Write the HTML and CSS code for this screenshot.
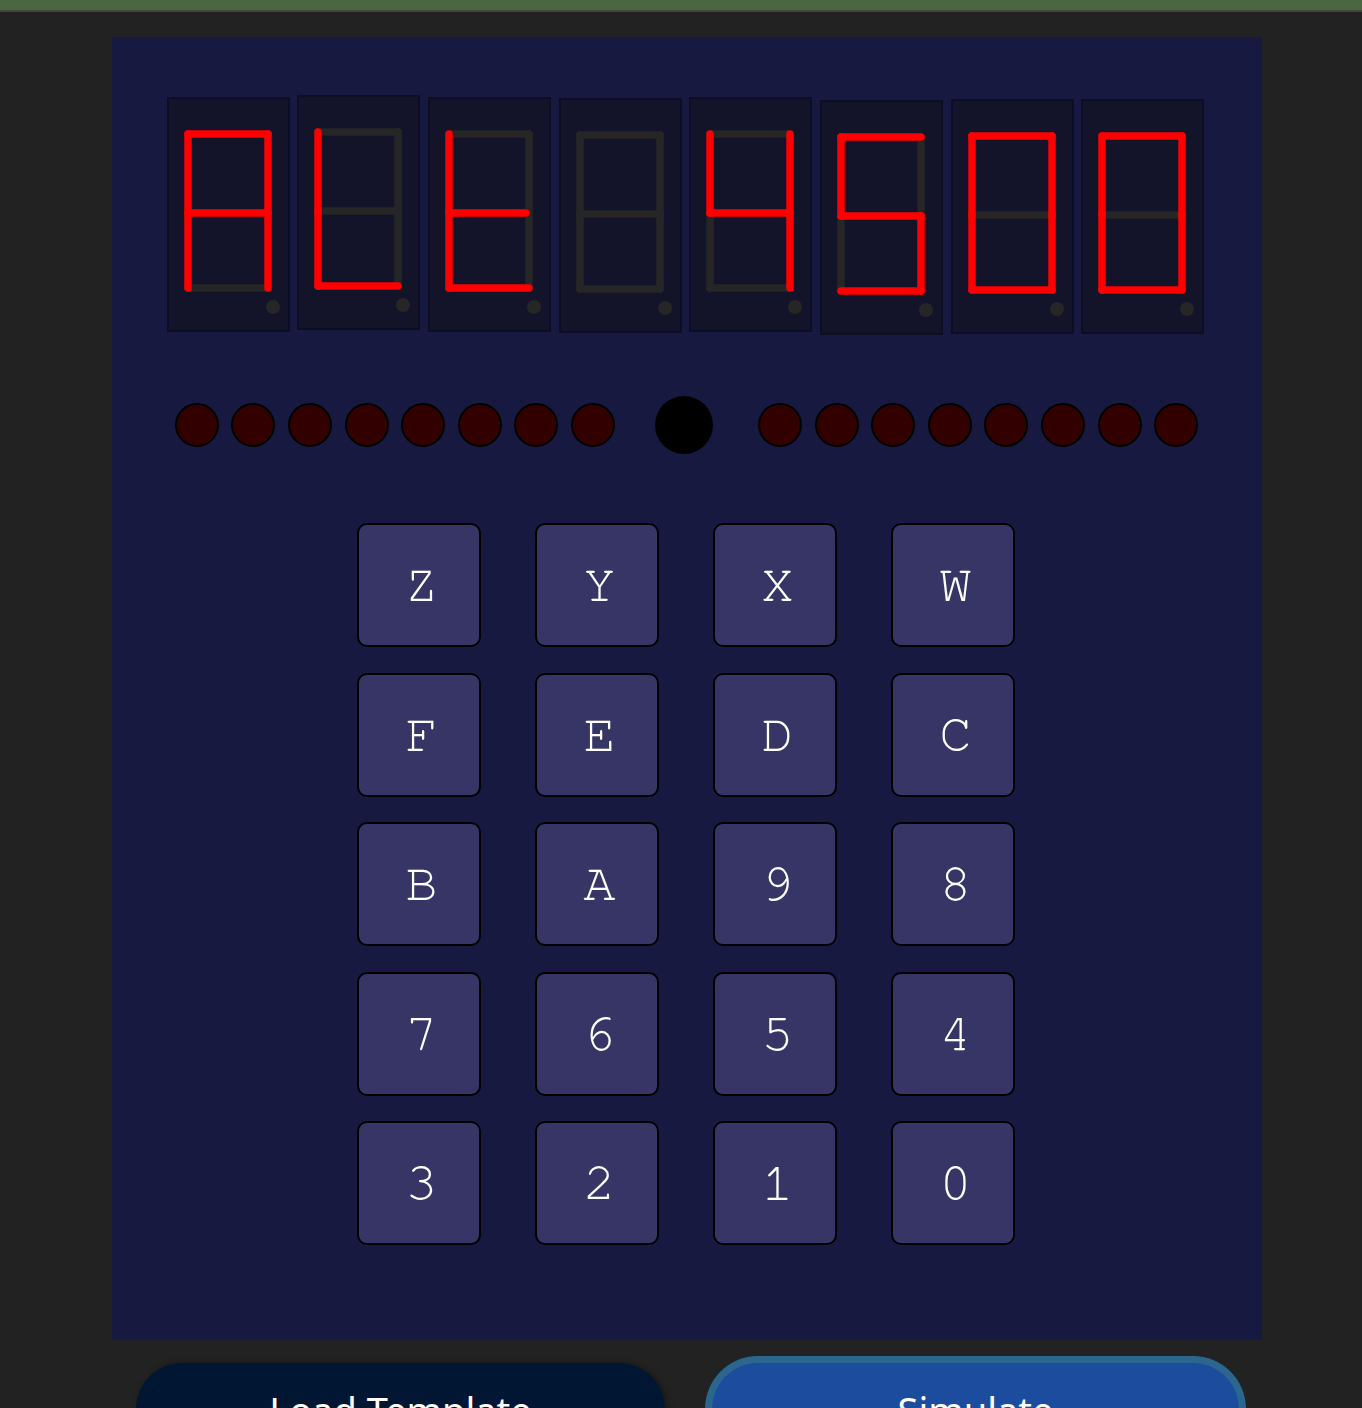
FILE: index.html
```html
<!DOCTYPE html>
<html lang="en">
<head>
<meta charset="utf-8">
<title>Hex Keypad Simulator</title>
<link rel="stylesheet" href="styles.css">
</head>
<body>
<div class="topbar"></div>
<main class="panel">
  <div class="digits">
    <div class="digit">
      <svg class="seg7" viewBox="0 0 119 231" width="119" height="231">
        <line class="seg off" x1="19" y1="189" x2="99" y2="189"/>
        <line class="seg on" x1="19" y1="35" x2="99" y2="35"/>
        <line class="seg on" x1="99" y1="35" x2="99" y2="114"/>
        <line class="seg on" x1="99" y1="114" x2="99" y2="189"/>
        <line class="seg on" x1="19" y1="114" x2="19" y2="189"/>
        <line class="seg on" x1="19" y1="35" x2="19" y2="114"/>
        <line class="seg on" x1="19" y1="114" x2="99" y2="114"/>
        <circle class="dp" cx="104" cy="208" r="7"/>
      </svg>
    </div>
    <div class="digit">
      <svg class="seg7" viewBox="0 0 119 231" width="119" height="231">
        <line class="seg off" x1="19" y1="35" x2="99" y2="35"/>
        <line class="seg off" x1="99" y1="35" x2="99" y2="114"/>
        <line class="seg off" x1="99" y1="114" x2="99" y2="189"/>
        <line class="seg off" x1="19" y1="114" x2="99" y2="114"/>
        <line class="seg on" x1="19" y1="189" x2="99" y2="189"/>
        <line class="seg on" x1="19" y1="114" x2="19" y2="189"/>
        <line class="seg on" x1="19" y1="35" x2="19" y2="114"/>
        <circle class="dp" cx="104" cy="208" r="7"/>
      </svg>
    </div>
    <div class="digit">
      <svg class="seg7" viewBox="0 0 119 231" width="119" height="231">
        <line class="seg off" x1="19" y1="35" x2="99" y2="35"/>
        <line class="seg off" x1="99" y1="35" x2="99" y2="114"/>
        <line class="seg off" x1="99" y1="114" x2="99" y2="189"/>
        <line class="seg on" x1="19" y1="189" x2="99" y2="189"/>
        <line class="seg on" x1="19" y1="114" x2="19" y2="189"/>
        <line class="seg on" x1="19" y1="35" x2="19" y2="114"/>
        <line class="seg on" x1="19" y1="114" x2="96" y2="114"/>
        <circle class="dp" cx="104" cy="208" r="7"/>
      </svg>
    </div>
    <div class="digit">
      <svg class="seg7" viewBox="0 0 119 231" width="119" height="231">
        <line class="seg off" x1="19" y1="35" x2="99" y2="35"/>
        <line class="seg off" x1="99" y1="35" x2="99" y2="114"/>
        <line class="seg off" x1="99" y1="114" x2="99" y2="189"/>
        <line class="seg off" x1="19" y1="189" x2="99" y2="189"/>
        <line class="seg off" x1="19" y1="114" x2="19" y2="189"/>
        <line class="seg off" x1="19" y1="35" x2="19" y2="114"/>
        <line class="seg off" x1="19" y1="114" x2="99" y2="114"/>
        <circle class="dp" cx="104" cy="208" r="7"/>
      </svg>
    </div>
    <div class="digit">
      <svg class="seg7" viewBox="0 0 119 231" width="119" height="231">
        <line class="seg off" x1="19" y1="35" x2="99" y2="35"/>
        <line class="seg off" x1="19" y1="189" x2="99" y2="189"/>
        <line class="seg off" x1="19" y1="114" x2="19" y2="189"/>
        <line class="seg on" x1="99" y1="35" x2="99" y2="114"/>
        <line class="seg on" x1="99" y1="114" x2="99" y2="189"/>
        <line class="seg on" x1="19" y1="35" x2="19" y2="114"/>
        <line class="seg on" x1="19" y1="114" x2="99" y2="114"/>
        <circle class="dp" cx="104" cy="208" r="7"/>
      </svg>
    </div>
    <div class="digit">
      <svg class="seg7" viewBox="0 0 119 231" width="119" height="231">
        <line class="seg off" x1="99" y1="35" x2="99" y2="114"/>
        <line class="seg off" x1="19" y1="114" x2="19" y2="189"/>
        <line class="seg on" x1="19" y1="35" x2="99" y2="35"/>
        <line class="seg on" x1="99" y1="114" x2="99" y2="189"/>
        <line class="seg on" x1="19" y1="189" x2="99" y2="189"/>
        <line class="seg on" x1="19" y1="35" x2="19" y2="114"/>
        <line class="seg on" x1="19" y1="114" x2="99" y2="114"/>
        <circle class="dp" cx="104" cy="208" r="7"/>
      </svg>
    </div>
    <div class="digit">
      <svg class="seg7" viewBox="0 0 119 231" width="119" height="231">
        <line class="seg off" x1="19" y1="114" x2="99" y2="114"/>
        <line class="seg on" x1="19" y1="35" x2="99" y2="35"/>
        <line class="seg on" x1="99" y1="35" x2="99" y2="114"/>
        <line class="seg on" x1="99" y1="114" x2="99" y2="189"/>
        <line class="seg on" x1="19" y1="189" x2="99" y2="189"/>
        <line class="seg on" x1="19" y1="114" x2="19" y2="189"/>
        <line class="seg on" x1="19" y1="35" x2="19" y2="114"/>
        <circle class="dp" cx="104" cy="208" r="7"/>
      </svg>
    </div>
    <div class="digit">
      <svg class="seg7" viewBox="0 0 119 231" width="119" height="231">
        <line class="seg off" x1="19" y1="114" x2="99" y2="114"/>
        <line class="seg on" x1="19" y1="35" x2="99" y2="35"/>
        <line class="seg on" x1="99" y1="35" x2="99" y2="114"/>
        <line class="seg on" x1="99" y1="114" x2="99" y2="189"/>
        <line class="seg on" x1="19" y1="189" x2="99" y2="189"/>
        <line class="seg on" x1="19" y1="114" x2="19" y2="189"/>
        <line class="seg on" x1="19" y1="35" x2="19" y2="114"/>
        <circle class="dp" cx="104" cy="208" r="7"/>
      </svg>
    </div>
  </div>

  <div class="leds">
    <div class="led-group">
      <span class="led"></span><span class="led"></span><span class="led"></span><span class="led"></span>
      <span class="led"></span><span class="led"></span><span class="led"></span><span class="led"></span>
    </div>
    <span class="led-center"></span>
    <div class="led-group">
      <span class="led"></span><span class="led"></span><span class="led"></span><span class="led"></span>
      <span class="led"></span><span class="led"></span><span class="led"></span><span class="led"></span>
    </div>
  </div>

  <div class="keypad">
    <button class="key">Z</button><button class="key">Y</button><button class="key">X</button><button class="key">W</button>
    <button class="key">F</button><button class="key">E</button><button class="key">D</button><button class="key">C</button>
    <button class="key">B</button><button class="key">A</button><button class="key">9</button><button class="key">8</button>
    <button class="key">7</button><button class="key">6</button><button class="key">5</button><button class="key">4</button>
    <button class="key">3</button><button class="key">2</button><button class="key">1</button><button class="key">0</button>
  </div>
</main>

<div class="actions">
  <button class="action load">Load Template</button>
  <button class="action simulate">Simulate</button>
</div>
</body>
</html>
```

FILE: styles.css
```css
html, body {
  margin: 0;
  padding: 0;
  background: #222222;
  overflow: hidden;
}

body {
  font-family: "Noto Sans", "Open Sans", sans-serif;
  height: 1408px;
}

.topbar {
  height: 10px;
  background: #4a6741;
  border-bottom: 2px solid #444444;
}

.panel {
  box-sizing: border-box;
  width: 1150px;
  height: 1303px;
  margin: 25px 0 0 112px;
  padding-top: 58px;
  background: #171940;
  display: flex;
  flex-direction: column;
  align-items: center;
}

/* seven segment display */
.digits {
  display: flex;
  align-items: flex-start;
  gap: 7.7px;
  height: 240px;
  margin-left: -3px;
}

.digit {
  width: 123px;
  height: 235px;
  box-sizing: border-box;
  background: #13142a;
  border: 2px solid #0d0e23;
}

.digit:nth-child(1) { margin-top: 2px; }
.digit:nth-child(2) { margin-top: 0; }
.digit:nth-child(3) { margin-top: 2px; }
.digit:nth-child(4) { margin-top: 3px; }
.digit:nth-child(5) { margin-top: 2px; }
.digit:nth-child(6) { margin-top: 5px; }
.digit:nth-child(7) { margin-top: 4px; }
.digit:nth-child(8) { margin-top: 4px; }

.seg7 {
  display: block;
}

.seg {
  stroke-width: 7.5;
  stroke-linecap: round;
}

.seg.off { stroke: #262626; }
.seg.on { stroke: #ff0000; }

.dp { fill: #262626; }

/* LED row */
.leds {
  display: flex;
  align-items: center;
  margin-top: 61px;
  margin-left: -1px;
  height: 58px;
}

.led-group {
  display: flex;
  gap: 12.6px;
}

.led {
  box-sizing: border-box;
  width: 44px;
  height: 44px;
  border-radius: 50%;
  background: #330000;
  border: 2px solid #000000;
}

.led-center {
  width: 58px;
  height: 58px;
  margin: 0 45px 0 40px;
  border-radius: 50%;
  background: #000000;
}

/* keypad */
.keypad {
  display: grid;
  grid-template-columns: repeat(4, 124px);
  grid-auto-rows: 124px;
  column-gap: 54px;
  row-gap: 25.5px;
  margin-top: 69px;
  margin-left: -2px;
}

.key {
  box-sizing: border-box;
  margin: 0;
  padding: 0 0 0 5px;
  background: #363566;
  border: 2px solid #000000;
  border-radius: 10px;
  color: #ffffff;
  font-family: "Nimbus Mono PS", "Nimbus Mono L", "FreeMono", "Courier 10 Pitch", "Courier", "Liberation Mono", monospace;
  font-size: 54px;
  line-height: 1;
}

/* bottom actions */
.actions {
  display: flex;
  align-items: flex-start;
  gap: 47px;
  margin: 23px 0 0 136px;
}

.action {
  box-sizing: border-box;
  margin: 0;
  padding: 21px 0 30px;
  border: none;
  border-radius: 46px;
  color: #ffffff;
  font-family: "Noto Sans", "Open Sans", sans-serif;
  font-size: 38px;
  line-height: 52px;
  text-align: center;
  display: block;
}

.action.load {
  width: 529px;
  background: #011633;
  box-shadow: 2px 0 6px rgba(0, 0, 0, 0.35);
}

.action.simulate {
  width: 527px;
  background: #1c4c9e;
  box-shadow: 0 0 0 7px #2b668f;
}
```
